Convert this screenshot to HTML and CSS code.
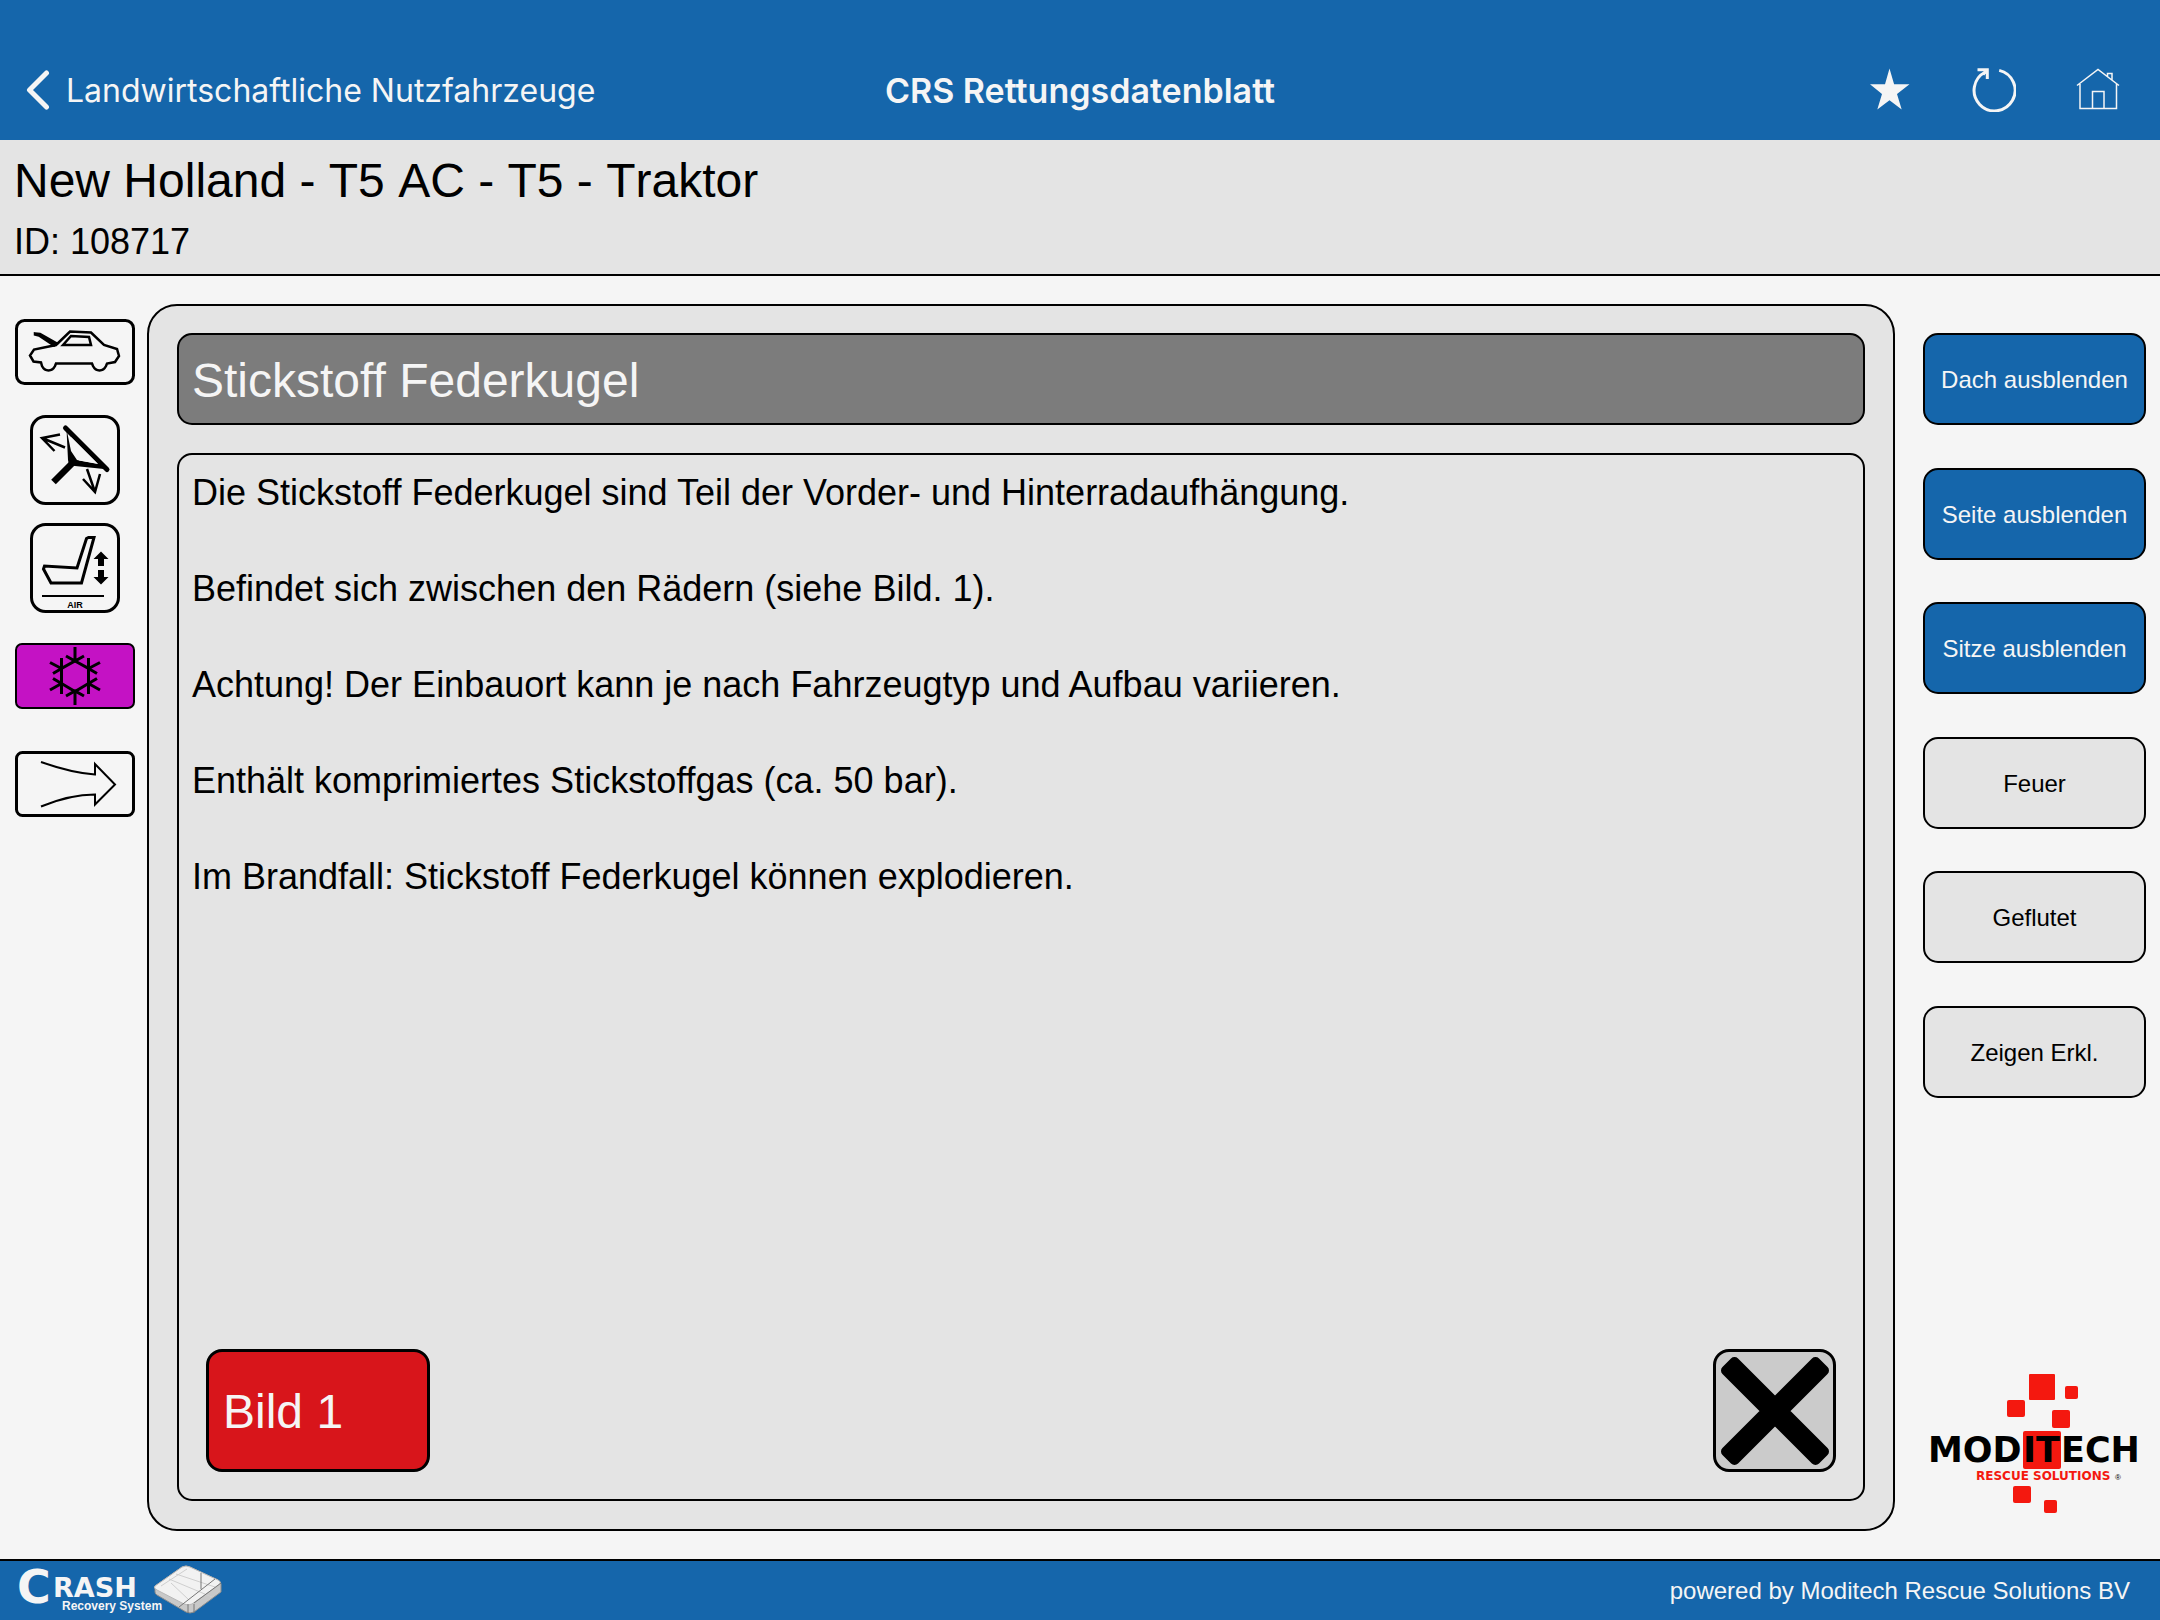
FILE: index.html
```html
<!DOCTYPE html>
<html lang="de">
<head>
<meta charset="utf-8">
<meta name="viewport" content="width=device-width, initial-scale=1">
<title>CRS Rettungsdatenblatt</title>
<link rel="stylesheet" href="styles.css">
</head>
<body>
<header class="navbar">
  <a class="back" href="#">
    <svg class="back-icon" width="24" height="40" viewBox="0 0 24 40" aria-hidden="true"><path d="M20.500 3L3.500 20l17 17" fill="none" stroke="#f5f5f5" stroke-width="5" stroke-linecap="round" stroke-linejoin="round"/></svg>
    <span>Landwirtschaftliche Nutzfahrzeuge</span>
  </a>
  <span class="navbar-title">CRS Rettungsdatenblatt</span>
  <div class="navbar-actions">
    <button class="icon-button" type="button" aria-label="Favorit">
      <svg width="44" height="44" viewBox="0 0 44 44"><path fill="#f5f5f5" d="M21.500 0.500l4.600 15.700h15.400l-12.500 9.700 4.700 15.500-12.200-9.200-12.200 9.200 4.700-15.500L2 16.200h15z"/></svg>
    </button>
    <button class="icon-button" type="button" aria-label="Neu laden">
      <svg width="44" height="44" viewBox="0 0 44 44" fill="none" stroke="#f5f5f5" stroke-width="3"><path d="M27.200 2.400A20.500 20.500 0 1 1 13.500 4"/><path d="M5.500 1.700h9.800v9.300M15 2l-4 4.500"/></svg>
    </button>
    <button class="icon-button" type="button" aria-label="Startseite">
      <svg width="44" height="44" viewBox="0 0 44 44" fill="none" stroke="#f5f5f5" stroke-width="1.500"><path d="M1 17.500L22 1.500l21 16M4 16v24.500h36.500V16M16.500 40V23.500h11.500V40M31.500 8.500v-3h4.500v7"/></svg>
    </button>
  </div>
</header>

<section class="vehicle">
  <h1 class="vehicle-name">New Holland - T5 AC - T5 - Traktor</h1>
  <p class="vehicle-id">ID: 108717</p>
</section>

<main class="workspace">
  <nav class="symbols" aria-label="Symbole">
    <button class="symbol symbol-wide" type="button" aria-label="Motorhaube">
      <svg width="120" height="66" viewBox="0 0 120 66" fill="none" stroke="#000" stroke-width="2.500">
        <rect x="1.500" y="1.500" width="117" height="63" rx="8" stroke-width="3"/>
        <path d="M27 47l-1-3.500-7.500-1-3.500-6 4-6L41 26l14-13.500 21 1L89 26l13 4 2 7-4 6-8 1.500-1 2.500c-3 6-10 6-13 0l-1-2.500H41l-1 2.500c-3 6-10 6-13 0z"/>
        <path d="M48 26l8-9 18 1 2 8z"/>
        <path d="M20 14.500l5 .5 17 9.500-3 2L24 16.500l-4-1z" fill="#000"/>
      </svg>
    </button>
    <button class="symbol" type="button" aria-label="Lenkradverstellung">
      <svg width="90" height="90" viewBox="0 0 90 90" fill="none" stroke="#000" stroke-width="2.500">
        <rect x="1.500" y="1.500" width="87" height="87" rx="14" stroke-width="3"/>
        <path d="M35.500 13L77 54.500" stroke-width="5" stroke-linecap="round"/>
        <path d="M23.500 67L43 47.500" stroke-width="6.500"/>
        <path d="M36.500 14l4.500 22 6 9 25 4.500 2 4.500-29-3-6-1-1-5z" fill="#000" stroke="none"/>
        <path d="M41 22l1.500 15 6.500 8.500 19 3.500z" fill="#f5f5f5" stroke="none"/>
        <path d="M30 19.500L12 23l12.500 13M12 23l23 9.500M53 64l12 13 5-18M65 77l-8-23"/>
      </svg>
    </button>
    <button class="symbol" type="button" aria-label="Luftgefederter Sitz">
      <svg width="90" height="90" viewBox="0 0 90 90" fill="none" stroke="#000" stroke-width="3">
        <rect x="1.500" y="1.500" width="87" height="87" rx="14"/>
        <path d="M13.500 46l1-3L47 45l9.500-29.500 2-1h5.500L51.500 60H21z"/>
        <path d="M12 73h62" stroke-width="2"/>
        <path d="M71 28.500l7.500 7.500H74v7h-6v-7h-4.500zM71 61.500l7.500-7.500H74v-7h-6v7h-4.500z" fill="#000" stroke="none"/>
        <text class="symbol-label" x="45" y="84.500" text-anchor="middle">AIR</text>
      </svg>
    </button>
    <button class="symbol symbol-wide" type="button" aria-label="Klimaanlage">
      <svg width="120" height="66" viewBox="0 0 120 66" fill="none" stroke="#000" stroke-width="3">
        <rect x="1" y="1" width="118" height="64" rx="6" fill="#c412c4" stroke-width="2"/>
        <path d="M60 18l13.500 7.500v15L60 48.500l-13.500-8v-15z"/>
        <path d="M60 4v14M60 48v14M73.500 15v36M46.500 15v36M51 13l9 5 9-5M51 53l9-5 9 5M35 19.500l11.500 6M38 30.500l8.500-5M85 19.500l-11.500 6M82 30.500l-8.500-5M35 47l11.500-6.500M38 35.500l8.500 5M85 47l-11.500-6.500M82 35.500l-8.500 5"/>
      </svg>
    </button>
    <button class="symbol symbol-wide" type="button" aria-label="Luftstrom">
      <svg width="120" height="66" viewBox="0 0 120 66" fill="none" stroke="#000" stroke-width="2">
        <rect x="1.500" y="1.500" width="117" height="63" rx="6" stroke-width="3"/>
        <path d="M26 11c17 6 34 11 54 12.500V13l20 20.500-20 20V43.500c-20 0-37 5-54 12"/>
      </svg>
    </button>
  </nav>

  <section class="panel">
    <h2 class="panel-title">Stickstoff Federkugel</h2>
    <div class="panel-body">
      <div class="panel-text">
        <p>Die Stickstoff Federkugel sind Teil der Vorder- und Hinterradaufhängung.</p>
        <p>Befindet sich zwischen den Rädern (siehe Bild. 1).</p>
        <p>Achtung! Der Einbauort kann je nach Fahrzeugtyp und Aufbau variieren.</p>
        <p>Enthält komprimiertes Stickstoffgas (ca. 50 bar).</p>
        <p>Im Brandfall: Stickstoff Federkugel können explodieren.</p>
      </div>
      <div class="panel-actions">
        <button class="picture-button" type="button">Bild 1</button>
        <button class="close-button" type="button" aria-label="Schließen">
          <svg width="110" height="110" viewBox="0 0 110 110"><path fill="none" stroke="#000" stroke-width="17" stroke-linejoin="round" d="M14.500 14.500L95.500 95.500M95.500 14.500L14.500 95.500"/><path fill="#000" stroke="#000" stroke-width="10" stroke-linejoin="round" d="M14.500 6L6 14.500 46.500 55 6 95.500l8.500 8.500L55 63.500l40.500 40.500 8.500-8.500L63.500 55 104 14.500 95.500 6 55 46.500z"/></svg>
        </button>
      </div>
    </div>
  </section>

  <aside class="side">
    <div class="side-buttons">
      <button class="option option-on" type="button">Dach ausblenden</button>
      <button class="option option-on" type="button">Seite ausblenden</button>
      <button class="option option-on" type="button">Sitze ausblenden</button>
      <button class="option" type="button">Feuer</button>
      <button class="option" type="button">Geflutet</button>
      <button class="option" type="button">Zeigen Erkl.</button>
    </div>
    <svg class="maker-logo" width="223" height="142" viewBox="0 0 223 142" role="img" aria-label="Moditech Rescue Solutions">
      <g fill="#f4180f">
        <rect x="106" y="1" width="26" height="26" rx="1"/>
        <rect x="142" y="13" width="13" height="13" rx="2"/>
        <rect x="84" y="27" width="18" height="17" rx="2"/>
        <rect x="129" y="37" width="18" height="18" rx="2"/>
        <rect x="100" y="58" width="38" height="38" rx="2"/>
        <rect x="90" y="113" width="18" height="17" rx="2"/>
        <rect x="121" y="127" width="13" height="13" rx="2"/>
      </g>
      <text class="maker-name" y="89"><tspan x="5">MOD</tspan><tspan x="100">IT</tspan><tspan x="138">ECH</tspan></text>
      <text class="maker-tag" x="53" y="107">RESCUE SOLUTIONS</text>
      <text class="maker-mark" x="192" y="107">®</text>
    </svg>
  </aside>
</main>

<footer class="footer">
  <svg class="crs-logo" width="210" height="59" viewBox="0 0 210 59" role="img" aria-label="Crash Recovery System">
    <text class="crs-initial" x="3" y="42">C</text>
    <text class="crs-name" x="39" y="36">RASH</text>
    <text class="crs-tag" x="48" y="49">Recovery System</text>
    <g stroke-linejoin="round" transform="translate(2 0)">
      <path d="M139 25l27-19q4-2 8 0l28 13q3 2 3 4v8l-27 20q-4 2-8 0l-29-17q-2-1-2-3z" fill="#c9c9c9" stroke="#8d8d8d"/>
      <path d="M139 25l27-19q4-2 8 0l28 13q4 2 1 5l-27 19q-4 2-8 0l-27-14q-4-2-2-4z" fill="#f2f2f2" stroke="#b8b8b8"/>
      <path d="M145 25l26-17M153 18l43 18M160 13l39 13M155 22l17 16" fill="none" stroke="#cfcfcf"/>
      <path d="M185 12v16M199 18l-36 28M205 22l-27 20M178 43v9M172 43v9" fill="none" stroke="#777"/>
    </g>
  </svg>
  <span>powered by Moditech Rescue Solutions BV</span>
</footer>
</body>
</html>
```
FILE: styles.css
```css
* {
  box-sizing: border-box;
}

body {
  display: flex;
  flex-direction: column;
  min-height: 100vh;
  margin: 0;
  background: #f5f5f5;
  color: #000;
  font-family: "Liberation Sans", Arial, sans-serif;
}

h1, h2, p {
  margin: 0;
  font-weight: 400;
}

button {
  padding: 0;
  border: 0;
  background: none;
  color: inherit;
  font: inherit;
  cursor: pointer;
}

svg {
  display: block;
}

/* Top bar */

.navbar {
  display: grid;
  grid-template-columns: 1fr auto 1fr;
  align-items: center;
  min-height: 140px;
  padding: 40px 40px 0;
  background: #1566ab;
  color: #f5f5f5;
  font-family: Inter, "Liberation Sans", sans-serif;
}

.back {
  display: flex;
  align-items: center;
  gap: 16px;
  margin-left: -14px;
  color: inherit;
  font-size: 32px;
  text-decoration: none;
  white-space: nowrap;
}

.navbar-title {
  font-size: 34px;
  font-weight: 600;
}

.navbar-actions {
  display: flex;
  justify-content: flex-end;
  gap: 60px;
}

/* Vehicle heading */

.vehicle {
  display: grid;
  gap: 12px;
  padding: 13px 14px 11px;
  border-bottom: 2px solid #000;
  background: #e4e4e4;
}

.vehicle-name {
  font-size: 48px;
  font-kerning: none;
  line-height: 56px;
}

.vehicle-id {
  font-size: 36px;
  line-height: 42px;
}

/* Main area */

.workspace {
  display: grid;
  flex: 1;
  grid-template-columns: 120px 1fr 223px;
  padding: 28px 14px 28px 15px;
}

.symbols {
  display: grid;
  grid-auto-rows: 108px;
  align-content: start;
  justify-items: center;
  align-items: center;
  margin-top: -6px;
}

.symbol-label {
  fill: #000;
  stroke: none;
  font-size: 9px;
  font-weight: 700;
}

.panel {
  display: flex;
  flex-direction: column;
  gap: 28px;
  margin: 0 28px 0 12px;
  padding: 27px 28px 28px;
  border: 2px solid #000;
  border-radius: 30px;
  background: #e4e4e4;
}

.panel-title {
  padding: 18px 13px 14px;
  border: 2px solid #000;
  border-radius: 15px;
  background: #7c7c7c;
  color: #f5f5f5;
  font-size: 48px;
  line-height: 56px;
}

.panel-body {
  display: flex;
  flex: 1;
  flex-direction: column;
  justify-content: space-between;
  gap: 48px;
  padding: 14px 27px 27px 13px;
  border: 2px solid #000;
  border-radius: 15px;
}

.panel-text {
  display: grid;
  gap: 48px;
  font-size: 36px;
  line-height: 48px;
}

.panel-actions {
  display: flex;
  justify-content: space-between;
  padding-left: 14px;
}

.picture-button,
.close-button {
  height: 123px;
  border: 3px solid #000;
  border-radius: 16px;
}

.picture-button {
  width: 224px;
  padding: 2px 14px 0;
  background: #d8151b;
  color: #f5f5f5;
  font-size: 48px;
  text-align: left;
}

.close-button {
  display: grid;
  place-items: center;
  width: 123px;
  background: #cbcbcb;
}

/* Right column */

.side {
  display: flex;
  flex-direction: column;
  justify-content: space-between;
  padding: 29px 0 16px;
}

.side-buttons {
  display: flex;
  flex-direction: column;
  justify-content: space-between;
  height: 765px;
}

.option {
  height: 92px;
  padding-top: 2px;
  border: 2px solid #000;
  border-radius: 15px;
  background: #e4e4e4;
  font-size: 24px;
}

.option-on {
  background: #1566ab;
  color: #f5f5f5;
}

.maker-name,
.maker-tag,
.crs-initial,
.crs-name {
  font-family: "DejaVu Sans", sans-serif;
  font-weight: 700;
}

.maker-name {
  font-size: 35px;
}

.maker-tag {
  fill: #f4180f;
  font-size: 12px;
}

.maker-mark {
  font-size: 8px;
}

/* Bottom bar */

.footer {
  display: flex;
  align-items: center;
  justify-content: space-between;
  padding: 0 30px 0 14px;
  border-top: 2px solid #000;
  background: #1566ab;
  color: #f5f5f5;
  font-size: 24px;
}

.crs-logo {
  fill: #f5f5f5;
}

.crs-initial {
  font-size: 46px;
}

.crs-name {
  font-size: 27px;
}

.crs-tag {
  font-family: "Liberation Sans", Arial, sans-serif;
  font-size: 12px;
  font-weight: 700;
}
```
